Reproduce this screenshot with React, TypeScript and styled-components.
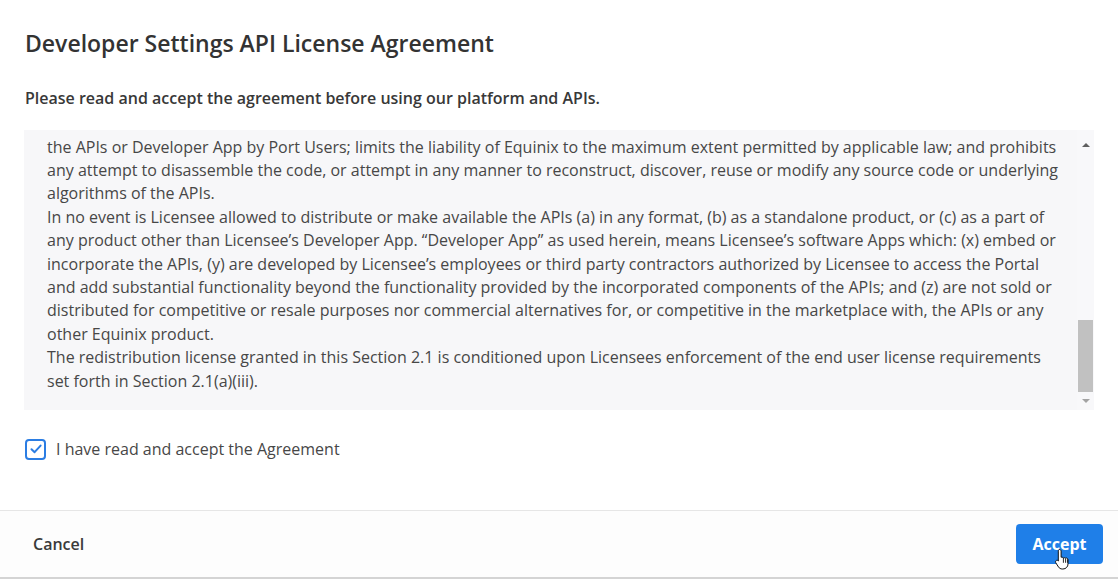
import React, { useEffect, useRef, useState } from 'react';
import styled, { createGlobalStyle } from 'styled-components';

const GlobalStyle = createGlobalStyle`
  html, body {
    margin: 0;
    padding: 0;
    background: #ffffff;
  }
  body {
    font-family: 'Open Sans', 'Noto Sans', 'Liberation Sans', sans-serif;
    color: #333333;
  }
  * {
    box-sizing: border-box;
  }
`;

const Dialog = styled.div`
  width: 1118px;
  height: 579px;
  display: flex;
  flex-direction: column;
  background: #ffffff;
  border-bottom: 2px solid #d4d4d4;
`;

const Body = styled.div`
  flex: 1;
  display: flex;
  flex-direction: column;
  padding: 27px 24px 0 24px;
`;

const Title = styled.h1`
  margin: 0 0 0 1px;
  font-size: 23px;
  line-height: 32px;
  font-weight: 600;
  color: #333333;
`;

const Subtitle = styled.p`
  margin: 28px 0 0 1px;
  font-size: 16px;
  line-height: 22px;
  font-weight: 600;
  color: #383838;
`;

const ScrollFrame = styled.div`
  margin-top: 21px;
  width: 1070px;
  height: 280px;
  display: flex;
  background: #f7f7f9;
`;

const ScrollArea = styled.div`
  flex: 1;
  overflow-y: scroll;
  scrollbar-width: none;
  padding: 4px 0 17px 23px;

  &::-webkit-scrollbar {
    display: none;
  }
`;

const Rail = styled.div`
  width: 17px;
  display: flex;
  flex-direction: column;
  background: #f8f8fa;
`;

const Arrow = styled.div<{ $dir: 'up' | 'down' }>`
  height: ${(p) => (p.$dir === 'up' ? '30px' : '18px')};
  display: flex;
  align-items: ${(p) => (p.$dir === 'up' ? 'flex-end' : 'center')};
  justify-content: center;
  padding-bottom: ${(p) => (p.$dir === 'up' ? '13px' : '0')};

  &::before {
    content: '';
    width: 0;
    height: 0;
    border-left: 4px solid transparent;
    border-right: 4px solid transparent;
    ${(p) =>
      p.$dir === 'up'
        ? 'border-bottom: 4px solid #5f5f5f;'
        : 'border-top: 4px solid #a3a3a3;'}
  }
`;

const Track = styled.div`
  flex: 1;
  display: flex;
  flex-direction: column;
  justify-content: flex-end;
  padding: 0 1px;
`;

const Thumb = styled.div`
  background: #c1c1c1;
`;

const Section = styled.p<{ $gap?: boolean }>`
  margin: 0 0 ${(p) => (p.$gap ? '12px' : '0')} 0;
  width: 1013px;
  font-size: 16px;
  line-height: 23.4px;
  color: #474747;
`;

const CheckRow = styled.label`
  margin-top: 28px;
  display: flex;
  align-items: center;
  gap: 10px;
  cursor: pointer;
`;

const Box = styled.span`
  margin-left: 1px;
  width: 21px;
  height: 21px;
  border: 2px solid #2b7de3;
  border-radius: 4px;
  display: flex;
  align-items: center;
  justify-content: center;
  background: #ffffff;
`;

const CheckLabel = styled.span`
  font-size: 16px;
  line-height: 22px;
  color: #474747;
`;

const Footer = styled.div`
  height: 67px;
  border-top: 1px solid #e6e6e6;
  background: #fdfdfd;
  display: flex;
  align-items: center;
  justify-content: space-between;
  padding: 0 15px 0 33px;
`;

const TextButton = styled.button`
  border: none;
  background: transparent;
  padding: 0;
  font-family: inherit;
  font-size: 16px;
  font-weight: 600;
  color: #3a3a3a;
  cursor: pointer;
`;

const PrimaryButton = styled.button`
  position: relative;
  width: 87px;
  height: 40px;
  border: none;
  border-radius: 4px;
  background: #1f7fe8;
  color: #ffffff;
  font-family: inherit;
  font-size: 16px;
  font-weight: 700;
  cursor: pointer;
`;

const Cursor = styled.svg`
  position: absolute;
  left: 38px;
  top: 24px;
  width: 18px;
  height: 22px;
  pointer-events: none;
`;

const earlier = [
  'This Developer Settings API License Agreement (“Agreement”) is entered into between Equinix, Inc. and its affiliates (“Equinix”) and the individual or entity accepting this Agreement (“Licensee”). By clicking “Accept”, registering for access to the Portal, or accessing or using any of the APIs, Licensee agrees to be bound by the terms of this Agreement. If the individual accepting this Agreement does so on behalf of a company or other legal entity, such individual represents that he or she has the authority to bind that entity to these terms. If Licensee does not agree to these terms, Licensee must not accept this Agreement and may not access or use the APIs. Equinix may update this Agreement from time to time by posting a revised version on the Portal, and continued use of the APIs after such posting constitutes acceptance of the revised terms.',
  '1. Definitions. “APIs” means the application programming interfaces, software development kits, sample code, libraries and related documentation made available by Equinix through the Portal. “Portal” means the Equinix developer portal through which Licensee registers for and obtains access credentials to the APIs. “Port Users” means the customers of Licensee who are authorized to use a Developer App in connection with Equinix services. “Term” means the period commencing on the date Licensee accepts this Agreement and ending upon its termination in accordance with Section 6.',
  '2. License. All rights not expressly granted to Licensee in this Agreement are reserved by Equinix. Licensee shall not use the APIs in any manner that could damage, disable, overburden or impair the Portal or any Equinix service, nor attempt to gain unauthorized access to any Equinix system, account or network through the APIs or by any other means. Equinix may monitor use of the APIs to verify compliance with this Agreement and may suspend access at any time without notice where it reasonably believes Licensee is in breach.',
  '2.1 License Grant. Subject to the terms and conditions of this Agreement, Equinix grants Licensee a limited, non-exclusive, non-transferable, non-sublicensable, revocable license during the Term to access and use the APIs and the documentation made available through the Portal solely for the purpose of developing, testing and supporting a Developer App that interoperates with Equinix services purchased by Licensee or by Port Users.',
  'Licensee may distribute the APIs solely as incorporated into a Developer App to Port Users, provided that Licensee enters into a written end user license agreement with each Port User that is at least as protective of Equinix and the APIs as the terms of this Agreement. Such end user license agreement shall, at a minimum: (i) prohibit the Port User from copying, modifying, translating or creating derivative works of the APIs; (ii) prohibit the Port User from distributing, sublicensing, renting, leasing or otherwise transferring the APIs to any third party; (iii) disclaim, to the maximum extent permitted by applicable law, all warranties on behalf of Equinix and its suppliers; (iv) exclude Equinix from any liability for damages arising from the use of',
];

export default function App() {
  const scrollRef = useRef<HTMLDivElement>(null);
  const trackRef = useRef<HTMLDivElement>(null);
  const [thumb, setThumb] = useState(70);

  useEffect(() => {
    const el = scrollRef.current;
    const track = trackRef.current;
    if (!el) return;
    el.scrollTop = el.scrollHeight;
    if (track) {
      const ratio = el.clientHeight / el.scrollHeight;
      setThumb(Math.max(24, Math.round(track.clientHeight * ratio)));
    }
  }, []);

  return (
    <>
      <GlobalStyle />
      <Dialog>
        <Body>
          <Title>Developer Settings API License Agreement</Title>
          <Subtitle>Please read and accept the agreement before using our platform and APIs.</Subtitle>
          <ScrollFrame>
            <ScrollArea ref={scrollRef}>
              {earlier.map((t, i) => (
                <Section key={i} $gap={i === earlier.length - 1}>
                  {t}
                </Section>
              ))}
              <Section>
                the APIs or Developer App by Port Users; limits the liability of Equinix to the maximum extent permitted by applicable law; and prohibits any attempt to disassemble the code, or attempt in any manner to reconstruct, discover, reuse or modify any source code or underlying algorithms of the APIs.
              </Section>
              <Section>
                In no event is Licensee allowed to distribute or make available the APIs (a) in any format, (b) as a standalone product, or (c) as a part of any product other than Licensee’s Developer App. “Developer App” as used herein, means Licensee’s software Apps which: (x) embed or incorporate the APIs, (y) are developed by Licensee’s employees or third party contractors authorized by Licensee to access the Portal and add substantial functionality beyond the functionality provided by the incorporated components of the APIs; and (z) are not sold or distributed for competitive or resale purposes nor commercial alternatives for, or competitive in the marketplace with, the APIs or any other Equinix product.
              </Section>
              <Section>
                The redistribution license granted in this Section 2.1 is conditioned upon Licensees enforcement of the end user license requirements set forth in Section 2.1(a)(iii).
              </Section>
            </ScrollArea>
            <Rail>
              <Arrow $dir="up" />
              <Track ref={trackRef}>
                <Thumb style={{ height: thumb }} />
              </Track>
              <Arrow $dir="down" />
            </Rail>
          </ScrollFrame>
          <CheckRow>
            <Box>
              <svg width="14" height="14" viewBox="0 0 14 14" fill="none">
                <path d="M2.5 7.2 L5.6 10.2 L11.6 3.6" stroke="#2b7de3" strokeWidth="2" strokeLinecap="round" strokeLinejoin="round" />
              </svg>
            </Box>
            <CheckLabel>I have read and accept the Agreement</CheckLabel>
          </CheckRow>
        </Body>
        <Footer>
          <TextButton>Cancel</TextButton>
          <PrimaryButton>
            Accept
            <Cursor viewBox="0 0 18 22">
              <path
                d="M5.5 1.5c.9 0 1.6.7 1.6 1.6v6.2l.3-.1c.8-.2 1.6.2 1.9.9.6-.5 1.6-.5 2.2.1.6-.4 1.5-.3 2 .3.3.3.5.7.5 1.2v4.3c0 2.7-2.1 5-5 5H8.2c-1.5 0-2.9-.8-3.7-2L1.8 14.8c-.5-.8-.3-1.8.5-2.3.7-.4 1.6-.2 2.1.4l-.1.1V3.1c0-.9.5-1.6 1.2-1.6z"
                fill="#ffffff"
                stroke="#111111"
                strokeWidth="1"
                strokeLinejoin="round"
              />
              <path d="M9.4 10.4v4M11.6 11v3.4M13.6 11.6v2.8" stroke="#111111" strokeWidth="0.9" strokeLinecap="round" />
            </Cursor>
          </PrimaryButton>
        </Footer>
      </Dialog>
    </>
  );
}
